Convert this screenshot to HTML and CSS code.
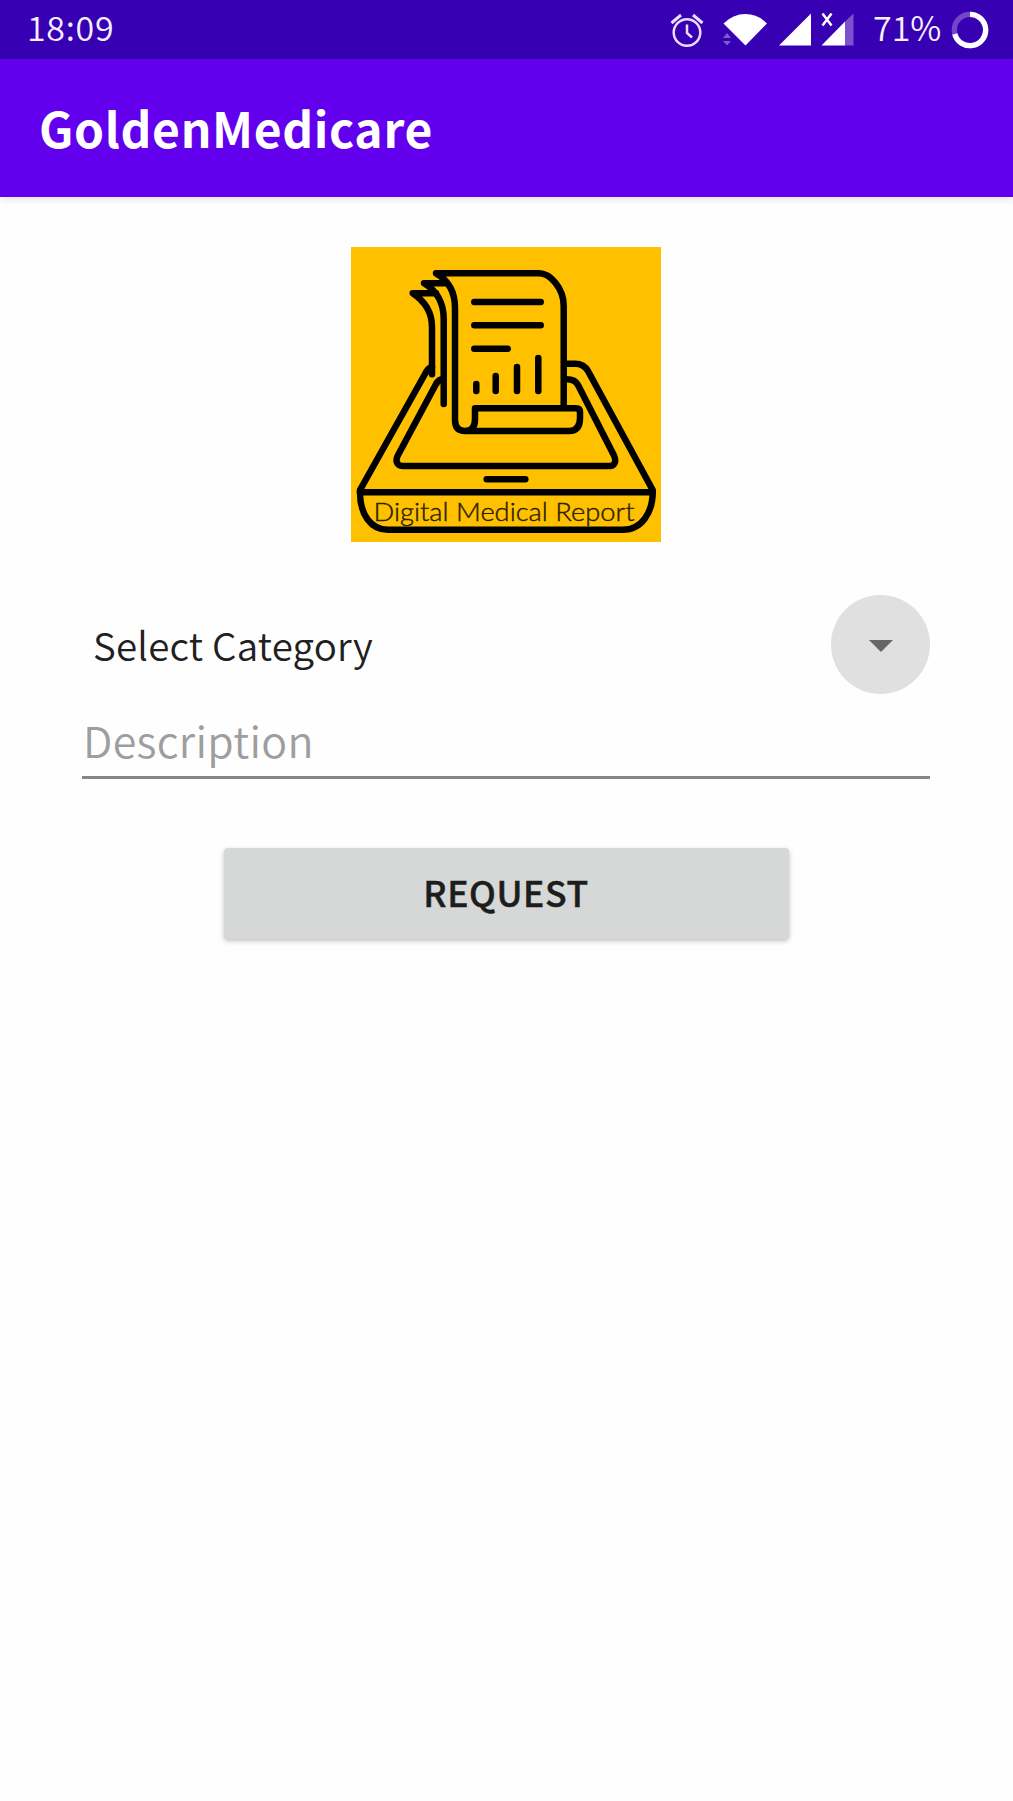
FILE: index.html
```html
<!DOCTYPE html>
<html lang="en">
<head>
<meta charset="utf-8">
<title>GoldenMedicare</title>
<link rel="stylesheet" href="styles.css">
</head>
<body>
<div class="status">
  <span class="clock">18:09</span>
  <div class="tray">
    <svg class="alarm" width="34" height="36" viewBox="0 0 34 36" fill="none" stroke="#e9dcff" stroke-width="2.5">
      <circle cx="17" cy="19.5" r="13.3"/>
      <path d="M17 11.500v8.500l5 4.500"/>
      <path stroke-width="3" d="M1.500 10 11 2M23 2l9.500 8"/>
    </svg>
    <svg class="wifi" width="44" height="36" viewBox="0 0 44 36">
      <path fill="#fff" d="M.5 10.500Q10 1 22.500 1T44 10.500L22.500 32.500Z"/>
      <path fill="#805bd0" d="M0 25 4 20l4 5zM0 28h8l-4 4.500z"/>
    </svg>
    <svg class="signal" width="32" height="36" viewBox="0 0 32 36"><path fill="#fff" d="M32 .5v32H0z"/></svg>
    <svg class="signal-two" width="34" height="36" viewBox="0 0 34 36">
      <path fill="#fff" d="M24 8.500v24H.5z"/>
      <path fill="#7d50cf" d="M24 8.500 32.500.5v32H24z"/>
      <path fill="none" stroke="#fff" stroke-width="2.500" d="m1.500.5 9 12m0-12-9 12"/>
    </svg>
    <span class="percent">71%</span>
    <svg class="battery" width="38" height="38" viewBox="0 0 38 38" fill="none" stroke-width="5.300">
      <circle cx="19" cy="19" r="15.700" stroke="#7446cb"/>
      <path stroke="#fff" d="M19 3.300A15.700 15.700 0 1 1 3.800 23"/>
    </svg>
  </div>
</div>
<header class="appbar"><h1 class="title">GoldenMedicare</h1></header>
<main class="content">
  <svg class="logo" width="310" height="295" viewBox="0 0 310 295" role="img" aria-label="Digital Medical Report">
    <path fill="#ffc000" d="M0 0h310v295H0z"/>
    <g class="ink">
      <path d="M81 120Q77 121 74 127L9 243v2.300H301.700V243L237 124Q233 116.700 224 116.700H215.700"/>
      <path d="M9 245C9 268 20 282.800 37 282.800H272C291 282.800 301.700 265 301.700 245"/>
      <path d="M91 132.300Q87 133 84.500 138L46.800 208.500C44 214 46 219 51.500 219H258.500C264 219 265.500 214 263 208.500L227 138Q224 132.300 215.700 132.300"/>
      <path d="M135.700 232.300H174.300"/>
      <path d="M85 46.300H61.700Q81 59 81 80V127.300"/>
      <path d="M94 36.300H73Q92.700 48 92.700 72V157"/>
      <path d="M212.700 161V59C212.700 41 199 26.300 188 26.300H85Q104 37 104 61V173Q104 184 114 184H218Q229 184 229 171V165Q229 161.300 225 161.300H124V172Q124 184 114 184"/>
      <path d="M123.300 55H189.700M123.300 78.300H189.700M123.300 101.700H156.700"/>
      <path d="M125.300 137V144M144.700 129V144M166 120V144M187.300 111V144"/>
    </g>
    <text class="logo-text" x="22.500" y="274" textLength="261" lengthAdjust="spacingAndGlyphs">Digital Medical Report</text>
  </svg>
  <div class="spinner">
    <span class="spinner-label">Select Category</span>
    <span class="drop"><svg width="24" height="12" viewBox="0 0 24 12"><path fill="#666" d="M0 0h24L12 12z"/></svg></span>
  </div>
  <div class="field"><span class="hint">Description</span></div>
  <button class="request"><span class="request-label">REQUEST</span></button>
</main>
</body>
</html>
```
FILE: styles.css
```css
body {
  margin: 0;
  min-height: 1801px;
  background: #fefefe;
  font-family: "Noto Sans CJK SC", "Noto Sans", sans-serif;
}
.status {
  display: flex;
  justify-content: space-between;
  height: 59px;
  box-sizing: border-box;
  padding: 0 24px 0 27px;
  background: #3700b3;
  color: #f6efff;
  font-size: 34px;
  line-height: 54px;
  font-weight: 350;
}
.clock { letter-spacing: .700px; }
.tray { display: flex; align-items: flex-start; }
.alarm { margin: 12.500px 19px 0 0; }
.wifi { margin: 12.500px 12px 0 0; }
.signal { margin: 12.500px 10px 0 0; }
.signal-two { margin-top: 12.500px; }
.percent { width: 68px; margin: 0 10px 0 18px; white-space: nowrap; }
.battery { margin-top: 10.500px; }
.appbar {
  height: 138px;
  padding-left: 39px;
  background: #6200ee;
  box-shadow: 0 1px 8px rgba(0, 0, 0, .15);
}
.title {
  margin: 0;
  color: #fff;
  font-size: 48px;
  font-weight: 700;
  line-height: 136px;
  letter-spacing: .650px;
}
.content {
  display: flex;
  flex-direction: column;
  align-items: center;
  padding: 50px 83px 0 82px;
}
.logo { display: block; margin-right: 1px; }
.ink {
  fill: none;
  stroke: #000;
  stroke-width: 6.500px;
  stroke-linecap: round;
  stroke-linejoin: round;
}
.logo-text {
  font-family: Lato, sans-serif;
  font-weight: 300;
  font-size: 25px;
  fill: #2b2000;
  stroke: #2b2000;
  stroke-width: .400px;
}
.spinner {
  display: flex;
  align-items: center;
  justify-content: space-between;
  width: 100%;
  height: 99px;
  margin-top: 53px;
}
.spinner-label {
  padding: 0 0 2px 11px;
  font-size: 38.500px;
  line-height: 60px;
  color: #202020;
  font-weight: 350;
  letter-spacing: .200px;
}
.drop {
  display: flex;
  align-items: center;
  justify-content: center;
  width: 99px;
  height: 99px;
  border-radius: 50%;
  background: #e0e0e0;
}
.drop svg { margin: 2px 0 0 1px; }
.field {
  width: 100%;
  height: 82px;
  border-bottom: 3px solid #868686;
}
.hint {
  display: block;
  padding-left: 1px;
  color: #9e9e9e;
  font-size: 43px;
  font-weight: 350;
  line-height: 91px;
  letter-spacing: .300px;
}
.request {
  width: 565px;
  height: 91px;
  margin-top: 69px;
  padding: 0 0 3px;
  border: 0;
  border-radius: 4px;
  background: #d6d8d7;
  box-shadow: 0 2px 5px rgba(0, 0, 0, .25);
  color: #1d1d1d;
  font-family: inherit;
  font-size: 35.500px;
  font-weight: 500;
  line-height: 88px;
  letter-spacing: .600px;
}
.request-label { -webkit-text-stroke: .500px #1d1d1d; }
```
